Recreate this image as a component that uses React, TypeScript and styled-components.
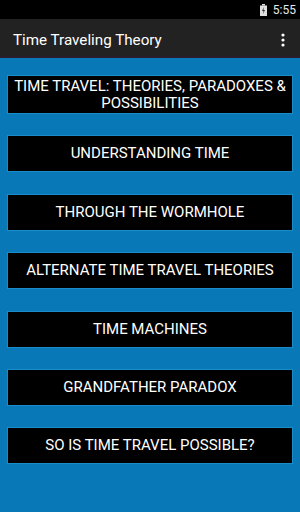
import React from "react";
import styled, { createGlobalStyle } from "styled-components";

const Global = createGlobalStyle`
  html, body { margin: 0; padding: 0; background: #0878b6; }
  body { font-family: Roboto, "Noto Sans", sans-serif; }
  * { box-sizing: border-box; }
`;

const Screen = styled.div`
  width: 300px;
  height: 512px;
  display: flex;
  flex-direction: column;
  background: #0878b6;
  overflow: hidden;
`;

const StatusBar = styled.div`
  height: 19px;
  background: #000;
  display: flex;
  align-items: center;
  justify-content: flex-end;
  padding-right: 4px;
  gap: 6px;
  color: #e8e8e8;
  font-size: 12px;
`;

const ActionBar = styled.div`
  height: 39px;
  background: #222222;
  display: flex;
  align-items: center;
  justify-content: space-between;
  padding: 4px 15px 0 13px;
  border-bottom: 2px solid #2a1c2a;
`;

const Title = styled.div`
  color: #fff;
  font-size: 15.2px;
`;

const List = styled.div`
  display: flex;
  flex-direction: column;
  gap: 23.4px;
  padding: 18px 8px 0 8px;
`;

const ItemButton = styled.div<{ $tall?: boolean }>`
  background: #000;
  color: #fff;
  height: ${(p) => (p.$tall ? 37 : 35)}px;
  display: flex;
  align-items: center;
  justify-content: center;
  text-align: center;
  font-size: 15px;
  line-height: 17px;
  padding: 0 2px;
  box-shadow: 0 0 0 1px #1a8cc9;
`;

const items = [
  "TIME TRAVEL: THEORIES, PARADOXES & POSSIBILITIES",
  "UNDERSTANDING TIME",
  "THROUGH THE WORMHOLE",
  "ALTERNATE TIME TRAVEL THEORIES",
  "TIME MACHINES",
  "GRANDFATHER PARADOX",
  "SO IS TIME TRAVEL POSSIBLE?",
];

export default function App() {
  return (
    <>
      <Global />
      <Screen>
        <StatusBar>
          <svg width="7" height="12" viewBox="0 0 7 12">
            <rect x="2" y="0" width="3" height="1.5" fill="#e0e0e0" />
            <rect x="0" y="1.5" width="7" height="10.5" fill="#e0e0e0" />
            <path d="M4 3 L2 7 L3.5 7 L3 10 L5 6 L3.5 6 Z" fill="#333" />
          </svg>
          <span>5:55</span>
        </StatusBar>
        <ActionBar>
          <Title>Time Traveling Theory</Title>
          <svg width="4" height="14" viewBox="0 0 4 14">
            <circle cx="2" cy="2" r="1.6" fill="#fff" />
            <circle cx="2" cy="7" r="1.6" fill="#fff" />
            <circle cx="2" cy="12" r="1.6" fill="#fff" />
          </svg>
        </ActionBar>
        <List>
          {items.map((t, i) => (
            <ItemButton key={t} $tall={i === 0}>
              {t}
            </ItemButton>
          ))}
        </List>
      </Screen>
    </>
  );
}
